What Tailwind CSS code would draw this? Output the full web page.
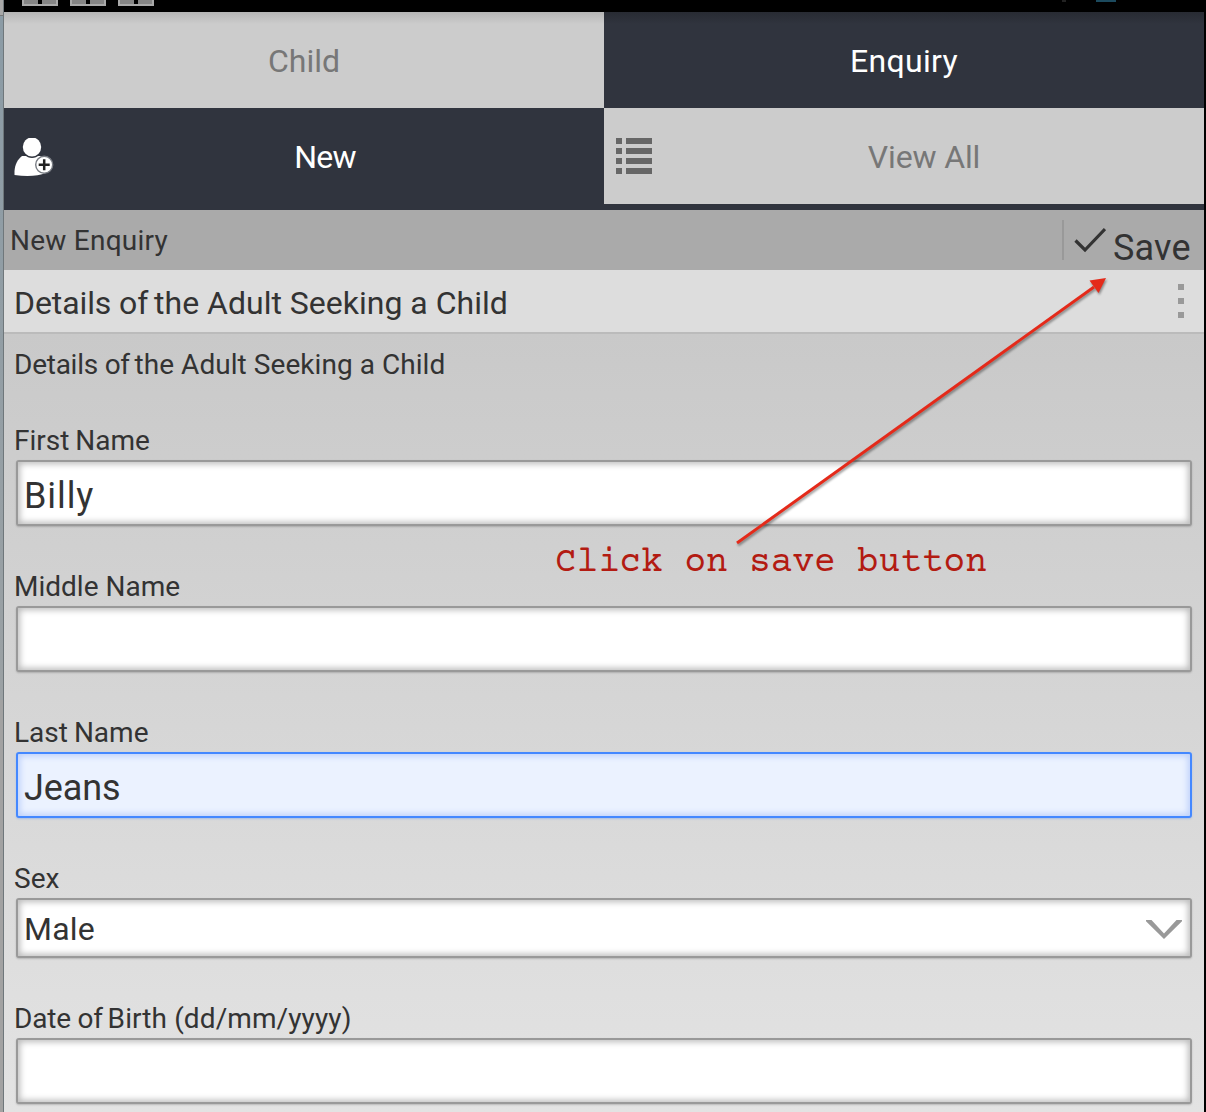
<!DOCTYPE html>
<html lang="en">
<head>
<meta charset="utf-8">
<title>New Enquiry</title>
<script src="https://cdn.jsdelivr.net/npm/@tailwindcss/browser@4"></script>
</head>
<body class="w-[1206px] h-[1112px] overflow-hidden bg-black font-[Roboto,sans-serif] text-[#333333]">
<div class="relative flex w-[1206px] h-[1112px] overflow-hidden">
  <!-- window edge -->
  <div class="w-1 shrink-0 flex flex-col border-r border-[#6f777b]">
    <div class="h-4 bg-[#a8a8a8] border-b border-[#777777]"></div>
    <div class="h-[684px] bg-linear-to-b from-[#8b9ba5] to-[#9ba1a4]"></div>
    <div class="grow bg-[#a2a2a2]"></div>
  </div>
  <div class="w-[1200px] shrink-0 flex flex-col">
    <!-- status bar -->
    <div class="h-3 shrink-0 bg-black flex items-start">
      <div class="flex gap-3 pl-[18px]">
        <div class="w-9 h-1.5 border-2 border-t-0 border-[#a9a9a9] bg-[#858585] flex justify-center"><div class="w-1 h-full bg-black"></div></div>
        <div class="w-9 h-1.5 border-2 border-t-0 border-[#a9a9a9] bg-[#858585] flex justify-center"><div class="w-1 h-full bg-black"></div></div>
        <div class="w-9 h-1.5 border-2 border-t-0 border-[#a9a9a9] bg-[#858585] flex justify-center"><div class="w-1 h-full bg-black"></div></div>
      </div>
      <div class="ml-auto mr-[88px] flex gap-[30px]"><div class="w-1 h-0.5 bg-[#222222]"></div><div class="w-5 h-0.5 bg-[#1c4a5e]"></div></div>
    </div>
    <!-- tabs -->
    <nav class="h-[198px] shrink-0 grid grid-cols-2 grid-rows-[96px_102px] bg-[#30343e] text-[32px] leading-[38px] text-white">
      <div class="bg-linear-to-b from-[#b5b5b5] to-[#cccccc] to-[12px] text-[#777777] flex justify-center pt-[30px]">Child</div>
      <div class="bg-linear-to-b from-[#282b33] to-[#30343e] to-[12px] flex justify-center pt-[30px] tracking-[0.3px]">Enquiry</div>
      <div class="flex pt-[30px] pl-2.5">
        <svg class="w-10 h-10 shrink-0" viewBox="0 0 40 40">
          <path d="M.5 37V33C1 26 4 21 8 18H26C29 19 31 23 32 27V35Q20 39.500 .5 37Z" fill="#fff"/>
          <ellipse cx="18" cy="9" rx="10.200" ry="11" fill="#30343e"/>
          <ellipse cx="18" cy="9" rx="9.200" ry="9.600" fill="#fff"/>
          <circle cx="30.200" cy="26.800" r="8.500" fill="#fff" stroke="#777b82" stroke-width="1.400"/>
          <path d="M30.200 21.300V32.300M24.700 26.800H35.700" stroke="#222" stroke-width="2.500"/>
        </svg>
        <div class="grow pl-[21px] pr-[29px] flex justify-center tracking-[-0.7px]">New</div>
      </div>
      <div class="h-24 bg-[#cccccc] text-[#777777] flex pt-[30px] pl-3">
        <svg class="w-9 h-9 shrink-0" viewBox="0 0 36 36" fill="#666"><path d="M0 0H6V6H0ZM10 0H36V6H10ZM0 10H6V16H0ZM10 10H36V16H10ZM0 20H6V26H0ZM10 20H36V26H10ZM0 30H6V36H0ZM10 30H36V36H10Z"/></svg>
        <div class="grow pr-[8px] flex justify-center tracking-[-0.15px]">View All</div>
      </div>
    </nav>
    <!-- action bar -->
    <div class="h-[60px] shrink-0 bg-[#aaaaaa] flex pl-1.5">
      <div class="text-[28px] leading-[33px] pt-3.5 tracking-[0.25px]">New Enquiry</div>
      <div class="ml-auto w-[142px] flex pt-2.5">
        <div class="w-0.5 h-10 bg-[#999999]"></div>
        <svg class="ml-2.5 mt-1.5 w-8 h-7 shrink-0" viewBox="0 0 32 28" fill="none" stroke="#333" stroke-width="3.200"><path d="M1.500 14.500L11 24L31 3"/></svg>
        <div class="ml-[7px] text-[36px] leading-[42px] pt-[7px] tracking-[0.2px]">Save</div>
      </div>
    </div>
    <!-- section selector -->
    <div class="h-16 shrink-0 bg-[#dddddd] border-b-2 border-[#bbbbbb] flex pl-2.5 pt-3.5 pr-5">
      <div class="text-[32px] leading-[38px]"><span class="tracking-[-0.1px]">Details of </span><span class="-ml-0.5">the Adult Seeking a Child</span></div>
      <div class="ml-auto flex flex-col gap-2"><i class="w-1.5 h-1.5 bg-[#999999]"></i><i class="w-1.5 h-1.5 bg-[#999999]"></i><i class="w-1.5 h-1.5 bg-[#999999]"></i></div>
    </div>
    <!-- form -->
    <main class="grow bg-linear-to-b from-[#c9c9c9] to-[#e3e3e3] pt-3.5 pl-2.5 pr-3 text-[28px] leading-[33px]">
      <div class="mb-[43px]"><span class="tracking-[-0.25px]">Details of </span><span class="-ml-[2px] tracking-[0.05px]">the Adult Seeking a Child</span></div>
      <label class="block mb-[3px]">First <span class="-ml-px">Name</span></label>
      <div class="ml-0.5 h-[66px] mb-[44px] bg-white border-2 border-[#999999] rounded-[3px] shadow-[inset_0_0_6px_2px_#bbbbbb,0_1px_2px_#00000030] text-[36px] leading-[42px] pl-1.5 pt-[13px] tracking-[0.9px]">Billy</div>
      <label class="block mb-[3px]">Middle Name</label>
      <div class="ml-0.5 h-[66px] mb-[44px] bg-white border-2 border-[#999999] rounded-[3px] shadow-[inset_0_0_6px_2px_#bbbbbb,0_1px_2px_#00000030]"></div>
      <label class="block mb-[3px]">Last <span class="-ml-px">Name</span></label>
      <div class="ml-0.5 h-[66px] mb-[44px] bg-[#ebf2ff] border-2 border-[#4488ff] rounded-[3px] shadow-[inset_0_0_6px_2px_#bccffa,0_1px_2px_#4488ff50] text-[36px] leading-[42px] pl-1.5 pt-[13px] tracking-[-0.1px]">Jeans</div>
      <label class="block mb-[3px]">Sex</label>
      <div class="ml-0.5 h-[60px] mb-[44px] bg-white border-2 border-[#999999] rounded-[3px] shadow-[inset_0_0_6px_2px_#bbbbbb,0_1px_2px_#00000030] text-[32px] leading-[38px] pl-1.5 pt-2.5 pr-2 flex justify-between"><span class="tracking-[0.2px]">Male</span>
        <svg class="w-9 h-5 mt-2.5" viewBox="0 0 36 20" fill="#999"><path d="M0 0H5.500L18 13.500L30.500 0H36V1.200L18 19L0 1.200Z"/></svg>
      </div>
      <label class="block mb-[3px]"><span class="tracking-[-0.2px]">Date of </span><span class="-ml-0.5 tracking-[0.1px]">Birth (dd/mm/yyyy)</span></label>
      <div class="ml-0.5 h-[66px] bg-white border-2 border-[#999999] rounded-[3px] shadow-[inset_0_0_6px_2px_#bbbbbb,0_1px_2px_#00000030]"></div>
    </main>
  </div>
  <!-- annotation -->
  <svg class="absolute left-0 top-0 w-[1206px] h-[1112px]" viewBox="0 0 1206 1112">
    <g class="drop-shadow-[1px_2px_1px_#00000060]"><path d="M737 543L1094 287" stroke="#e42a1a" stroke-width="3"/><path d="M1106 278L1089.500 280.500L1098.500 293Z" fill="#e42a1a"/></g>
  </svg>
  <div class="absolute left-[555px] top-[543px] font-['Courier_Prime','Liberation_Mono',monospace] text-[36px] leading-[41px] text-[#b31b12] whitespace-nowrap">Click on save button</div>
</div>
</body>
</html>
